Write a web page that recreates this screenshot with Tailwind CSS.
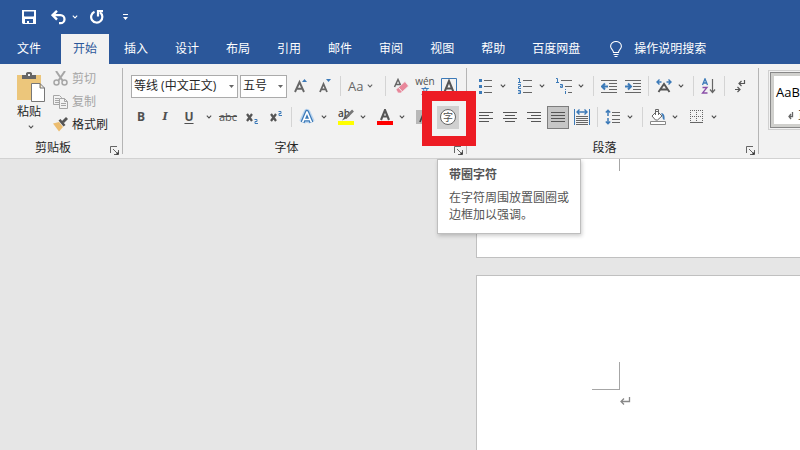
<!DOCTYPE html>
<html lang="zh-CN">
<head>
  <meta charset="UTF-8">
  <meta name="viewport" content="width=device-width, initial-scale=1.0">
  <title>Word</title>
  <script src="https://cdn.jsdelivr.net/npm/@tailwindcss/browser@4"></script>
</head>
<body class="h-screen flex flex-col overflow-hidden bg-[#e6e6e6] font-['Open_Sans','Noto_Sans_CJK_SC',sans-serif] text-xs leading-4 text-[#262626]">

  <!-- shared icons -->
  <svg class="hidden">
    <symbol id="chev" viewBox="0 0 6 4"><path d="M.8 .7 3 2.900 5.200 .7" fill="none" stroke="currentColor" stroke-width="1.100"/></symbol>
    <symbol id="launch" viewBox="0 0 9 9"><path d="M.5 7V.5H7M3 3l4 4M8.500 4v4.500H4" fill="none" stroke="#555" stroke-width=".9"/><path d="M8.500 5.500v3h-3z" fill="#333"/></symbol>
  </svg>

  <header class="bg-[#2b579a] text-white">
    <!-- quick access -->
    <div class="h-[34px] flex items-center pl-[22px]">
      <button aria-label="保存">
        <svg class="w-3.5 h-3.5" viewBox="0 0 14 14"><path fill="#fff" fill-rule="evenodd" d="M0 0h14v14H1l-1-1zM2 1.500v4.500l.5.5h9l.5-.5V1.500zM3 9v4h2v-2h2v2h4V9z"/></svg>
      </button>
      <button class="ml-[15px]" aria-label="撤消">
        <svg class="w-[15px] h-[15px]" viewBox="0 0 15 15" fill="none" stroke="#fff"><path d="M6 .8 1.600 5.200 6 9.600" stroke-width="2.400"/><path d="M2 5.200h7.500a3.900 3.900 0 0 1 0 8H8" stroke-width="2.300"/></svg>
      </button>
      <button class="ml-1.5" aria-label="撤消列表"><svg class="w-1.5 h-1"><use href="#chev"/></svg></button>
      <button class="ml-3" aria-label="重复">
        <svg class="w-[14px] h-[14px]" viewBox="0 0 14 14" fill="none" stroke="#fff"><path d="M4.500 1.800a5.600 5.600 0 1 0 5.500.6" stroke-width="2.200"/><path d="M8 6.500V1.200H13" stroke-width="2.200"/></svg>
      </button>
      <button class="ml-[19px]" aria-label="自定义快速访问工具栏">
        <svg class="w-[5px] h-1.5" viewBox="0 0 5 6" fill="#fff"><path d="M0 0h5v1H0zM0 3h5L2.500 6z"/></svg>
      </button>
    </div>
    <!-- tabs -->
    <nav class="h-[30px] flex gap-[3px] pl-[5px] whitespace-nowrap">
      <a href="#" class="px-3 flex items-center mr-[5px]">文件</a>
      <a href="#" class="px-3 flex items-center bg-[#f2f2f2] text-[#2b579a]">开始</a>
      <a href="#" class="px-3 flex items-center">插入</a>
      <a href="#" class="px-3 flex items-center">设计</a>
      <a href="#" class="px-3 flex items-center">布局</a>
      <a href="#" class="px-3 flex items-center">引用</a>
      <a href="#" class="px-3 flex items-center">邮件</a>
      <a href="#" class="px-3 flex items-center">审阅</a>
      <a href="#" class="px-3 flex items-center">视图</a>
      <a href="#" class="px-3 flex items-center">帮助</a>
      <a href="#" class="px-3 flex items-center">百度网盘</a>
      <a href="#" class="pl-[15px] flex items-center gap-3">
        <svg class="w-3 h-4" viewBox="0 0 12 16" fill="none" stroke="#fff"><path d="M3.500 11.500C3.500 9 .6 8.300.6 5.300a5.400 4.800 0 0 1 10.800 0c0 3-2.900 3.700-2.900 6.200zM3.500 13.500h5M4.500 15.500h3" stroke-width="1.100"/></svg>
        操作说明搜索
      </a>
    </nav>
  </header>

  <!-- ribbon -->
  <div class="relative z-10 shrink-0 flex bg-[#f2f2f2] border-b border-[#d2d2d2] text-[#505050]">

    <section class="shrink-0 w-[123px] relative flex flex-col pt-[3px]">
      <div class="flex h-[71px] pl-4">
        <button class="w-[30px] flex flex-col items-center pt-1 text-[#262626]">
          <svg class="w-[30px] h-[32px]" viewBox="0 0 30 32"><path fill="#ecc67b" d="M1 4h24v25H1z"/><path fill="#666" d="M6 4h4V2l1.500-1h3L16 2v2h4v4H6z"/><path fill="#f2f2f2" d="M12 3h2v2h-2z"/><path fill="#fff" stroke="#777" d="M15.500 12.500H24l4.500 4.500v13.500h-13zM24 12.500V17h4.500"/></svg>
          <span class="-ml-1 mt-px">粘贴</span>
          <svg class="w-1.5 h-1 mt-[5px] shrink-0 text-[#555]"><use href="#chev"/></svg>
        </button>
        <div class="ml-[7px] flex flex-col whitespace-nowrap">
          <button class="h-[23px] flex items-center gap-1 text-[#a6a6a6]" disabled>
            <svg class="w-[15px] h-[15px]" viewBox="0 0 15 15" fill="none" stroke="#a6a6a6"><path d="M3 0l6.500 9.500M12 0 5.500 9.500" stroke-width="2"/><circle cx="3.500" cy="11.500" r="2.500" stroke-width="1.500"/><circle cx="11.500" cy="11.500" r="2.500" stroke-width="1.500"/></svg>剪切
          </button>
          <button class="h-[23px] flex items-center gap-1 text-[#a6a6a6]" disabled>
            <svg class="w-[15px] h-[15px]" viewBox="0 0 15 15" fill="#f2f2f2" stroke="#a6a6a6"><path d="M.5 1.500h6l2 2v7h-8zM2 4.500h4M2 6.500h4M2 8.500h4"/><path d="M6.500 4.500h5l3 3v7h-8zM11.500 4.500v3h3M8 9.500h5M8 11.500h5"/></svg>复制
          </button>
          <button class="h-[23px] flex items-center gap-1 text-[#262626]">
            <svg class="w-[15px] h-[15px]" viewBox="0 0 15 15"><path fill="#ecbd70" d="M0 6.500 6 5l4 5-4 4.500z"/><path fill="#555" d="M5.500 3.500l2-1.500 5 6-2 1.500zM9 4l4-4 2 2-4 4z"/></svg>格式刷
          </button>
        </div>
      </div>
      <div class="flex h-5 items-center pr-px text-[#262626]"><span class="flex-1 text-center">剪贴板</span><button class="w-4 pl-1" aria-label="剪贴板选项"><svg class="w-[9px] h-[9px] mt-1"><use href="#launch"/></svg></button></div>
      <i class="absolute right-0 top-1 bottom-1 w-px bg-[#b5b5b5]"></i>
    </section>

    <section class="shrink-0 w-[344px] relative flex flex-col">
      <div class="h-[74px] flex flex-col gap-[7px] pt-2.5 pl-1.5">
        <div class="h-6 flex items-center">
          <label class="relative ml-0.5">
            <select aria-label="字体" class="appearance-none block w-[107px] h-[23px] pl-0.5 bg-white border border-[#ababab] text-[#262626]"><option>等线 (中文正文)</option></select>
            <svg class="absolute right-1 top-2.5 w-[5px] h-[3px]" viewBox="0 0 5 3"><path fill="#666" d="M0 0h5L2.500 3z"/></svg>
          </label>
          <label class="relative ml-0.5">
            <select aria-label="字号" class="appearance-none block w-[47px] h-[23px] pl-0.5 bg-white border border-[#ababab] text-[#262626]"><option>五号</option></select>
            <svg class="absolute right-1 top-2.5 w-[5px] h-[3px]" viewBox="0 0 5 3"><path fill="#666" d="M0 0h5L2.500 3z"/></svg>
          </label>
          <div class="flex ml-0.5">
            <button class="w-6 h-6 flex items-center justify-center" aria-label="增大字号"><svg class="w-4 h-4" viewBox="0 0 16 16"><path d="M2 14 6.500 4 11 14M3.800 10.700h5.400" fill="none" stroke="#666" stroke-width="1.900"/><path fill="#3c7ab8" d="M9 4h5l-2.500-3z"/></svg></button>
            <button class="w-6 h-6 flex items-center justify-center" aria-label="减小字号"><svg class="w-4 h-4" viewBox="0 0 16 16"><path d="M3 14 6.500 6 10 14M4.300 11.300h4.400" fill="none" stroke="#666" stroke-width="1.800"/><path fill="#3c7ab8" d="M9 1h5l-2.500 3z"/></svg></button>
          </div>
          <i class="w-px h-5 mx-[3px] bg-[#d4d4d4]"></i>
          <button class="w-[38px] h-6 flex items-center gap-1 pl-1 text-[13px] font-medium text-[#666]" aria-label="更改大小写">Aa<svg class="w-1.5 h-1"><use href="#chev"/></svg></button>
          <i class="w-px h-5 mx-[3px] bg-[#d4d4d4]"></i>
          <div class="flex">
            <button class="w-6 h-6 flex items-center justify-center" aria-label="清除所有格式"><svg class="w-4 h-4" viewBox="0 0 16 16"><path d="M1.500 9 5 1.500 8.500 9M3 6.500h4" fill="none" stroke="#666" stroke-width="1.500"/><path fill="#e8879a" stroke="#f2f2f2" stroke-width=".7" d="M3 11.500 12 3.500l3.500 4.500L8 15H5z"/><path d="M5.500 9.500 9.500 14" stroke="#f2f2f2"/></svg></button>
            <button class="w-6 h-6 flex flex-col items-center justify-center text-[10px]" aria-label="拼音指南"><span class="leading-[10px]">wén</span><span class="text-[#3c7ab8] text-[8px] leading-[10px] font-bold">文</span></button>
            <button class="w-6 h-6 flex items-center justify-center" aria-label="字符边框"><svg class="w-4 h-4" viewBox="0 0 16 16" fill="none"><path d="M.5 .5h15v15H.5z" stroke="#3c7ab8"/><path d="M3.500 14 8 3l4.500 11M5 10.500h6" stroke="#555" stroke-width="2"/></svg></button>
          </div>
        </div>
        <div class="h-6 flex items-center">
          <div class="flex">
            <button class="w-6 h-6 font-bold" aria-label="加粗">B</button>
            <button class="w-6 h-6 font-bold italic font-['DejaVu_Serif',serif] text-[11px]" aria-label="倾斜">I</button>
            <button class="w-6 h-6 font-bold underline underline-offset-2" aria-label="下划线">U</button>
            <button class="w-[15px] h-6 flex items-center justify-center" aria-label="下划线样式"><svg class="w-1.5 h-1"><use href="#chev"/></svg></button>
            <button class="w-6 h-6 flex items-center justify-center text-[11px] line-through" aria-label="删除线">abc</button>
            <button class="w-6 h-6 flex items-center justify-center" aria-label="下标"><svg class="w-3.5 h-3.5" viewBox="0 0 14 14" fill="none"><path d="M2 4 7 11M7 4 2 11" stroke="#555" stroke-width="2.200"/><path d="M9.500 9.500h2.500v2h-2v2h3" stroke="#3c7ab8"/></svg></button>
            <button class="w-6 h-6 flex items-center justify-center" aria-label="上标"><svg class="w-3.5 h-3.5" viewBox="0 0 14 14" fill="none"><path d="M2 4 7 11M7 4 2 11" stroke="#555" stroke-width="2.200"/><path d="M9.500 1.500h2.500v2h-2v2h3" stroke="#3c7ab8"/></svg></button>
          </div>
          <i class="w-px h-5 mx-[3px] bg-[#d4d4d4]"></i>
          <div class="flex gap-px">
            <button class="w-[38px] h-6 flex items-center pl-1 gap-1.5" aria-label="文本效果"><svg class="w-4 h-4 overflow-visible" viewBox="0 0 16 16" fill="none" stroke-linejoin="round"><path d="M3.500 13 8 3.500 12.500 13M5 10.500h6" stroke="#bcd5ee" stroke-width="7"/><path d="M3.500 13.500 8 3l4.500 10.500M5.500 10.500h5" stroke="#3c7ab8" stroke-width="4.200"/><path d="M3.500 13.500 8 3l4.500 10.500M5.500 10.500h5" stroke="#fff" stroke-width="1.700"/></svg><svg class="w-1.5 h-1"><use href="#chev"/></svg></button>
            <button class="w-[38px] h-6 flex items-center pl-1 gap-1.5" aria-label="文本突出显示颜色"><svg class="w-4 h-4 overflow-visible" viewBox="0 0 16 16" fill="none"><path fill="#ff0" d="M0 12h16v4H0z"/><text x="0" y="8" fill="#444" font-size="10" font-weight="600">ab</text><path d="M15 1.500 7.500 9" stroke="#777" stroke-width="2.600"/><path d="M4 11.500 7 7l2 2z" fill="#555"/></svg><svg class="w-1.5 h-1"><use href="#chev"/></svg></button>
            <button class="w-[38px] h-6 flex items-center pl-1 gap-1.5" aria-label="字体颜色"><svg class="w-4 h-4" viewBox="0 0 16 16" fill="none"><path fill="#f00" d="M0 12h16v4H0z"/><path d="M4 11 8 1l4 10M5.500 7.500h5" stroke="#555" stroke-width="2.100"/></svg><svg class="w-1.5 h-1"><use href="#chev"/></svg></button>
            <div class="flex">
              <button class="w-6 h-6 flex items-center justify-center" aria-label="字符底纹"><svg class="w-4 h-4" viewBox="0 0 16 16" fill="none"><path fill="#b8b8b8" d="M0 1h16v14H0z"/><path d="M4 13 8 3l4 10M5.500 9.500h5" stroke="#444" stroke-width="1.700"/></svg></button>
              <div class="relative">
                <button class="w-6 h-6 flex items-center justify-center" aria-label="带圈字符" aria-describedby="tip"><span class="w-[22px] h-[23px] bg-[#d0d0d0] flex items-center justify-center"><span class="w-4 h-4 rounded-full border border-[#666] bg-white text-[10px] leading-3.5">字</span></span></button>
                <!-- red highlight frame -->
                <div class="absolute -left-3.5 -top-3.5 w-[54px] h-[55px] border-10 border-[#ed1c24] pointer-events-none z-20"></div>
                <div id="tip" role="tooltip" class="absolute left-px top-[54px] w-36 h-[75px] pl-[11px] pt-1.5 bg-white border border-[#bebebe] shadow-[1px_2px_4px_rgba(0,0,0,0.2)] leading-[17px] text-[#555] whitespace-nowrap">
                  <p class="font-bold mb-1.5">带圈字符</p>
                  <p>在字符周围放置圆圈或<br>边框加以强调。</p>
                </div>
              </div>
            </div>
          </div>
        </div>
      </div>
      <div class="flex h-5 items-center pr-px text-[#262626]"><span class="flex-1 text-center">字体</span><button class="w-4 pl-1" aria-label="字体选项"><svg class="w-[9px] h-[9px] mt-1"><use href="#launch"/></svg></button></div>
      <i class="absolute right-0 top-1 bottom-1 w-px bg-[#b5b5b5]"></i>
    </section>

    <section class="shrink-0 w-[292px] relative flex flex-col">
      <div class="h-[74px] flex flex-col gap-[7px] pt-2.5 pl-[7px]">
        <div class="h-6 flex items-center">
          <div class="flex gap-px">
            <button class="w-[38px] h-6 flex items-center pl-1 gap-1.5" aria-label="项目符号"><svg class="w-4 h-4" viewBox="0 0 16 16"><path fill="#3c7ab8" d="M1 1h3v3H1zM1 7h3v3H1zM1 13h3v3H1z"/><path d="M6 2.500h8M6 8.500h8M6 14.500h8" stroke="#666"/></svg><svg class="w-1.5 h-1"><use href="#chev"/></svg></button>
            <button class="w-[38px] h-6 flex items-center pl-1 gap-1.5" aria-label="编号"><svg class="w-4 h-4" viewBox="0 0 16 16" fill="none"><path stroke="#3c7ab8" d="M1 .5h1.500V4M1 4.500h3M1 6.500h2.500v2h-2v2H4M1 12.500h2.500v3H1M1.500 14h2"/><path d="M6 2.500h9M6 8.500h9M6 14.500h9" stroke="#666"/></svg><svg class="w-1.5 h-1"><use href="#chev"/></svg></button>
            <button class="w-[38px] h-6 flex items-center pl-1 gap-1.5" aria-label="多级列表"><svg class="w-4 h-4" viewBox="0 0 16 16" fill="none"><path stroke="#3c7ab8" d="M0 .5h1.500V4M0 4.500h3M4 6.500h2.500v3H4.500v-1.500h2M9.500 11v1M9.500 13v3"/><path d="M5 2.500h11M9 8.500h7M12 14.500h4" stroke="#666"/></svg><svg class="w-1.5 h-1"><use href="#chev"/></svg></button>
          </div>
          <i class="w-px h-5 mx-[3px] bg-[#d4d4d4]"></i>
          <div class="flex">
            <button class="w-6 h-6 flex items-center justify-center" aria-label="减少缩进量"><svg class="w-4 h-4" viewBox="0 0 16 16" fill="none"><path d="M0 2.500h16M8 5.500h8M8 8.500h8M8 11.500h8M0 14.500h16" stroke="#666"/><path d="M7 8.500H2M4 5.500l-3 3 3 3" stroke="#3c7ab8" stroke-width="2"/></svg></button>
            <button class="w-6 h-6 flex items-center justify-center" aria-label="增加缩进量"><svg class="w-4 h-4" viewBox="0 0 16 16" fill="none"><path d="M0 2.500h16M8 5.500h8M8 8.500h8M8 11.500h8M0 14.500h16" stroke="#666"/><path d="M0 8.500h5M3 5.500l3 3-3 3" stroke="#3c7ab8" stroke-width="2"/></svg></button>
          </div>
          <i class="w-px h-5 mx-[3px] bg-[#d4d4d4]"></i>
          <button class="w-[38px] h-6 flex items-center pl-1 gap-1.5" aria-label="中文版式"><svg class="w-4 h-4" viewBox="0 0 16 16" fill="none"><path d="M2.500 14 8 6l5.500 8M4.500 11.500h7" stroke="#555" stroke-width="1.900"/><path d="M5.500 4H1M3.500 1.500 1 4l2.500 2.500M10.500 4H15M12.500 1.500 15 4l-2.500 2.500" stroke="#3c7ab8" stroke-width="1.400"/></svg><svg class="w-1.5 h-1"><use href="#chev"/></svg></button>
          <i class="w-px h-5 mx-[3px] bg-[#d4d4d4]"></i>
          <button class="w-6 h-6 flex items-center justify-center" aria-label="排序"><svg class="w-4 h-4" viewBox="0 0 16 16" fill="none"><path d="M1.500 7 4 .8 6.500 7M2.500 5h3" stroke="#3c7ab8" stroke-width="1.300"/><path d="M1.500 9.500H6L1.500 15h5" stroke="#8a4fa8" stroke-width="1.300"/><path d="M11.500 1v13M9 11.500l2.500 3 2.500-3" stroke="#666" stroke-width="1.200"/></svg></button>
          <i class="w-px h-5 mx-[3px] bg-[#d4d4d4]"></i>
          <button class="w-6 h-6 flex items-center justify-center" aria-label="显示编辑标记"><svg class="w-4 h-4" viewBox="0 0 16 16" fill="none" stroke="#555" stroke-width="1.200"><path d="M12.500 2v3.500H7.500M9.500 3 7 5.500 9.500 8M3 11.500h4.500M5.500 9 8 11.500 5.500 14"/></svg></button>
        </div>
        <div class="h-6 flex items-center">
          <div class="flex">
            <button class="w-6 h-6 flex items-center justify-center" aria-label="左对齐"><svg class="w-4 h-4" viewBox="0 0 16 16"><path d="M1 3.500h14M1 6.500h10M1 9.500h14M1 12.500h10" stroke="#555"/></svg></button>
            <button class="w-6 h-6 flex items-center justify-center" aria-label="居中"><svg class="w-4 h-4" viewBox="0 0 16 16"><path d="M1 3.500h14M3 6.500h10M1 9.500h14M3 12.500h10" stroke="#555"/></svg></button>
            <button class="w-6 h-6 flex items-center justify-center" aria-label="右对齐"><svg class="w-4 h-4" viewBox="0 0 16 16"><path d="M1 3.500h14M5 6.500h10M1 9.500h14M5 12.500h10" stroke="#555"/></svg></button>
            <button class="w-6 h-6 flex items-center justify-center" aria-label="两端对齐"><span class="w-[22px] h-[23px] border border-[#7d7d7d] bg-[#c6c6c6] flex items-center justify-center"><svg class="w-4 h-4" viewBox="0 0 16 16"><path d="M1 3.500h14M1 6.500h14M1 9.500h14M1 12.500h14" stroke="#555"/></svg></span></button>
            <button class="w-6 h-6 flex items-center justify-center" aria-label="分散对齐"><svg class="w-4 h-4" viewBox="0 0 16 16" fill="none"><path d="M2 7.500h12M2 9.500h12M2 11.500h12M2 13.500h12M2 15.500h12" stroke="#666"/><path d="M.5 0v16M15.500 0v16" stroke="#3c7ab8"/><path d="M3 3h10M5.500 .5 3 3l2.500 2.500M10.500 .5 13 3l-2.500 2.500" stroke="#3c7ab8" stroke-width="1.400"/></svg></button>
          </div>
          <i class="w-px h-5 mx-[3px] bg-[#d4d4d4]"></i>
          <button class="w-[38px] h-6 flex items-center pl-1 gap-1.5" aria-label="行和段落间距"><svg class="w-4 h-4" viewBox="0 0 16 16" fill="none"><path d="M7 3.500h8M7 6.500h8M7 10.500h8M7 13.500h8" stroke="#666"/><path d="M3 1v6M.8 3.500 3 1.300l2.200 2.200M3 9v6M.8 12.500 3 14.700l2.200-2.200" stroke="#3c7ab8" stroke-width="1.500"/></svg><svg class="w-1.5 h-1"><use href="#chev"/></svg></button>
          <i class="w-px h-5 mx-[3px] bg-[#d4d4d4]"></i>
          <div class="flex gap-px">
            <button class="w-[38px] h-6 flex items-center pl-1 gap-1.5" aria-label="底纹"><svg class="w-4 h-4" viewBox="0 0 16 16" fill="none"><path d="M.5 12.500h15v3H.5z" fill="#fff" stroke="#888"/><path d="M2 7l5-5 5 5-4.500 4h-2z" fill="#fff" stroke="#666"/><path d="M5.500 6V.5h3V6" stroke="#666"/><path d="M11 4c3 0 4 3 3.500 7-2-.5-2-2-2-4z" fill="#3c7ab8"/></svg><svg class="w-1.5 h-1"><use href="#chev"/></svg></button>
            <button class="w-[38px] h-6 flex items-center pl-1 gap-1.5" aria-label="边框"><svg class="w-4 h-4" viewBox="0 0 16 16" fill="none" stroke="#666"><path d="M1 1.500h13M1 7.500h13M1.500 1v13M7.500 1v13M13.500 1v13" stroke-dasharray="1 1"/><path d="M1 13.500h13"/></svg><svg class="w-1.5 h-1"><use href="#chev"/></svg></button>
          </div>
        </div>
      </div>
      <div class="flex h-5 items-center pr-px text-[#262626]"><span class="flex-1 text-center">段落</span><button class="w-4 pl-1" aria-label="段落选项"><svg class="w-[9px] h-[9px] mt-1"><use href="#launch"/></svg></button></div>
      <i class="absolute right-0 top-1 bottom-1 w-px bg-[#b5b5b5]"></i>
    </section>

    <!-- styles gallery -->
    <section class="flex-1 min-w-0 overflow-hidden pt-1.5 pl-[9px]">
      <div class="w-20 h-[60px] border border-[#d0d0d0] p-px">
        <button class="w-full h-full border border-[#888] bg-[#d0d0cd] p-[3px] flex">
          <span class="flex-1 h-full bg-white pl-0.5 text-left whitespace-nowrap text-black">
            <span class="block pt-2 text-[13px]">AaBbCcDd</span>
            <span class="flex items-center gap-1 pl-3 pt-2 text-[#444]"><svg class="w-1.5 h-2 shrink-0" viewBox="0 0 6 8" fill="none" stroke="#666"><path d="M4.500 0v4.500H1M3 2 1 4.500 3 7" stroke-width="1.300"/></svg>正文</span>
          </span>
        </button>
      </div>
    </section>
  </div>

  <!-- document -->
  <main class="flex-1 min-h-0 flex flex-col gap-[17px] pl-[476px]">
    <div class="h-[99px] shrink-0 bg-white border-l border-b border-[#c0c0c0]">
      <div class="w-[143px] h-3 border-r border-[#a6a6a6]"></div>
    </div>
    <div class="flex-1 bg-white border-l border-t border-[#c0c0c0] pt-[86px]">
      <div class="ml-[115px] w-7 h-7 border-r border-b border-[#a6a6a6]"></div>
      <svg class="ml-[143px] mt-1.5 w-3 h-3" viewBox="0 0 12 12" fill="none" stroke="#888"><path d="M9.500 1v4.500H1M4 2.500l-3 3 3 3" stroke-width="1.300"/></svg>
    </div>
  </main>
</body>
</html>
